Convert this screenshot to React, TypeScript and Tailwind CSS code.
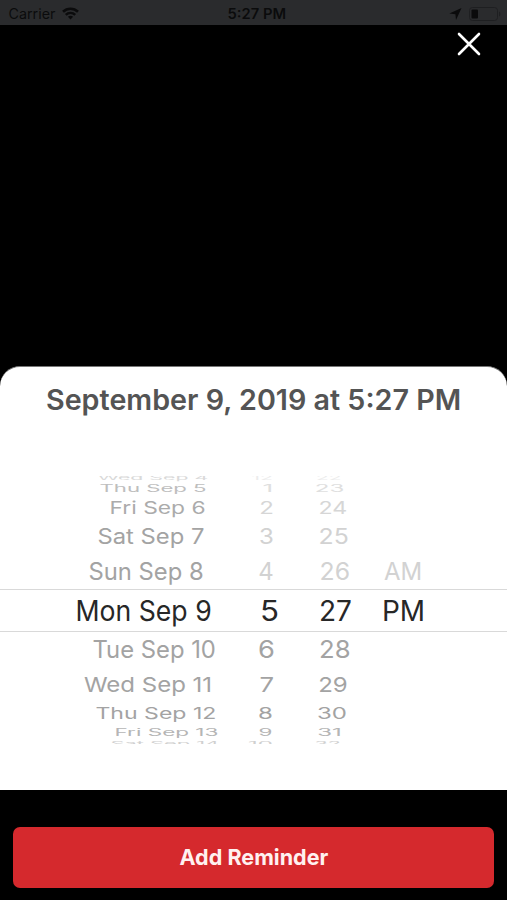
import * as React from "react";
import { clsx } from "clsx";

type FitTextProps = {
  children: string;
  width: number;
  scaleY?: number;
  className?: string;
};

// stretches a single line of text so that it fills the given width
function FitText({ children, width, scaleY = 1, className }: FitTextProps) {
  const ref = React.useRef<HTMLSpanElement>(null);
  const [scaleX, setScaleX] = React.useState(1);

  React.useLayoutEffect(() => {
    if (ref.current) {
      setScaleX(width / ref.current.offsetWidth);
    }
  }, [width, children]);

  return (
    <span className="flex shrink-0 justify-center" style={{ width }}>
      <span
        ref={ref}
        className={clsx("shrink-0 whitespace-nowrap leading-none", className)}
        style={{ transform: `scale(${scaleX}, ${scaleY})` }}
      >
        {children}
      </span>
    </span>
  );
}

type Cell = { text: string; left: number; width: number };

type WheelRow = {
  height: number;
  scaleY: number;
  tone: "past" | "selected" | "future";
  fade?: string;
  cells: Cell[];
};

const cell = (text: string, left: number, right: number): Cell => ({
  text,
  left,
  width: right - left,
});

const ROWS: WheelRow[] = [
  {
    height: 3,
    scaleY: 0.24,
    tone: "past",
    fade: "opacity-40",
    cells: [cell("Wed Sep 4", 98, 208), cell("12", 252, 273), cell("22", 316, 341)],
  },
  {
    height: 19,
    scaleY: 0.42,
    tone: "past",
    fade: "opacity-70",
    cells: [cell("Thu Sep 5", 100, 207), cell("1", 262, 273), cell("23", 315, 344)],
  },
  {
    height: 20,
    scaleY: 0.7,
    tone: "past",
    fade: "opacity-90",
    cells: [cell("Fri Sep 6", 110, 206), cell("2", 259, 274), cell("24", 318, 347)],
  },
  {
    height: 37,
    scaleY: 0.88,
    tone: "past",
    cells: [cell("Sat Sep 7", 97, 204), cell("3", 259, 274), cell("25", 319, 349)],
  },
  {
    height: 34,
    scaleY: 1,
    tone: "past",
    cells: [
      cell("Sun Sep 8", 89, 204),
      cell("4", 258, 274),
      cell("26", 319, 350),
      cell("AM", 384, 422),
    ],
  },
  {
    height: 43,
    scaleY: 1,
    tone: "selected",
    cells: [
      cell("Mon Sep 9", 76, 212),
      cell("5", 260, 279),
      cell("27", 319, 352),
      cell("PM", 382, 425),
    ],
  },
  {
    height: 35,
    scaleY: 1,
    tone: "future",
    cells: [cell("Tue Sep 10", 93, 216), cell("6", 258, 275), cell("28", 319, 350)],
  },
  {
    height: 35,
    scaleY: 0.86,
    tone: "future",
    cells: [cell("Wed Sep 11", 84, 212), cell("7", 259, 274), cell("29", 318, 348)],
  },
  {
    height: 23,
    scaleY: 0.65,
    tone: "future",
    cells: [cell("Thu Sep 12", 95, 216), cell("8", 258, 273), cell("30", 317, 347)],
  },
  {
    height: 16,
    scaleY: 0.42,
    tone: "future",
    fade: "opacity-80",
    cells: [cell("Fri Sep 13", 114, 218), cell("9", 258, 272), cell("31", 317, 342)],
  },
  {
    height: 5,
    scaleY: 0.25,
    tone: "future",
    fade: "opacity-50",
    cells: [cell("Sat Sep 14", 110, 219), cell("10", 248, 273), cell("32", 315, 341)],
  },
];

function PickerRow({ height, scaleY, tone, fade, cells }: WheelRow) {
  return (
    <div
      className={clsx(
        "flex items-center",
        tone === "selected"
          ? "border-y border-[#d9d9d9] text-[28px] text-[#272727]"
          : "text-2xl",
        fade
      )}
      style={{ height }}
    >
      {cells.map((c, i) => {
        const prev = cells[i - 1];
        const start = prev ? prev.left + prev.width : 0;
        return (
          <div
            key={c.text}
            className={clsx({
              "text-[#a3a3a3]": tone === "future" || (tone === "past" && i === 0),
              "text-[#d2d2d2]": tone === "past" && i > 0,
            })}
            style={{ marginLeft: c.left - start }}
          >
            <FitText width={c.width} scaleY={scaleY}>
              {c.text}
            </FitText>
          </div>
        );
      })}
    </div>
  );
}

function StatusBar() {
  return (
    <header className="grid h-[25px] grid-cols-3 items-center bg-[#2a2b2d] pt-0.5 text-[#0b0b0c]">
      <div className="flex items-center gap-[7px] pl-2">
        <FitText width={47} className="text-sm">
          Carrier
        </FitText>
        <svg width="17" height="13" viewBox="0 0 17 13" fill="none" stroke="currentColor">
          <path d="M1 4.8C5.2 .7 11.8 .7 16 4.8" strokeWidth="2.6" />
          <path d="M3.8 7.9C6.4 5.2 10.6 5.2 13.2 7.9" strokeWidth="2.4" />
          <path d="M8.5 12.4 5.9 9.8C7.4 8.5 9.6 8.5 11.1 9.8Z" fill="currentColor" stroke="none" />
        </svg>
      </div>
      <div className="flex justify-center pl-1.5">
        <FitText width={59} className="text-sm font-semibold">
          5:27 PM
        </FitText>
      </div>
      <div className="flex items-center justify-end gap-[7px] pr-1.5">
        <svg width="13" height="12" viewBox="0 0 13 12" fill="currentColor">
          <path d="M12.5 0 7 12 6.4 6.2 .3 5.5Z" />
        </svg>
        <svg width="32" height="14" viewBox="0 0 32 14" fill="none">
          <rect x=".5" y=".5" width="28" height="13" rx="3" stroke="#1e1f21" />
          <rect x="2.5" y="2.5" width="6.5" height="9" rx="1" fill="currentColor" />
          <path d="M30 4.5C31.8 5.2 31.8 8.8 30 9.5Z" fill="#1e1f21" />
        </svg>
      </div>
    </header>
  );
}

export default function App() {
  return (
    <main className="flex h-[900px] w-[507px] flex-col overflow-hidden bg-black font-[Inter,sans-serif]">
      <StatusBar />

      <div className="flex h-[341px] items-start justify-end pt-[7px] pr-[26px]">
        <button type="button" aria-label="Close">
          <svg width="24" height="24" viewBox="0 0 24 24" stroke="white" strokeWidth="2.6" strokeLinecap="round">
            <path d="M2 2 22 22M22 2 2 22" />
          </svg>
        </button>
      </div>

      <section className="h-[424px] rounded-t-[20px] border-t border-[#777] bg-white">
        <h1 className="flex h-[65px] items-center justify-center text-[28px] font-semibold text-[#545454]">
          <FitText width={415}>September 9, 2019 at 5:27 PM</FitText>
        </h1>
        <div className="mt-11 h-[268px] overflow-hidden">
          {ROWS.map((row) => (
            <PickerRow key={row.cells[0].text} {...row} />
          ))}
        </div>
      </section>

      <footer className="flex flex-1 flex-col px-[13px] pt-[37px] pb-3">
        <button
          type="button"
          className="flex flex-1 items-center justify-center rounded-[7px] bg-[#d5292d] pb-0.5 text-[22px] font-bold text-[#fff1f0]"
        >
          <FitText width={149}>Add Reminder</FitText>
        </button>
      </footer>
    </main>
  );
}
